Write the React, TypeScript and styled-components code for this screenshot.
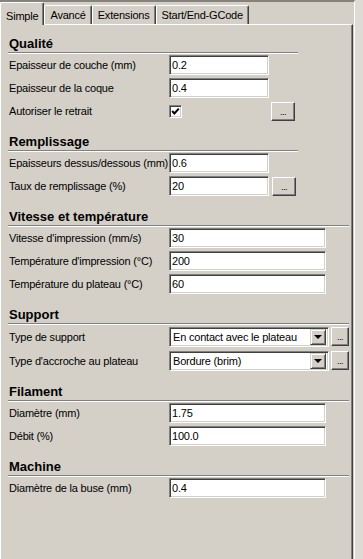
import styled, { createGlobalStyle } from 'styled-components'

const GlobalStyle = createGlobalStyle`
  html, body {
    margin: 0;
    padding: 0;
    background: #d4d0c8;
  }
  body {
    width: 363px;
    height: 559px;
    overflow: hidden;
    font-family: "Liberation Sans", Arial, sans-serif;
  }
`

const Frame = styled.div`
    display: flex;
    width: 363px;
    height: 559px;
    background: #d4d0c8;
`

const Window = styled.div`
    width: 353px;
    padding-right: 1px;
    border-top: 2px solid #85827c;
    border-right: 1px solid #fff;
    display: flex;
    flex-direction: column;
`

const SideStrip = styled.div`
    flex: 1;
    background: #dedbd4;
`

const TabBar = styled.div`
    display: flex;
    align-items: flex-end;
    height: 22px;
    position: relative;
    z-index: 1;
`

const Tab = styled.div<{ $active?: boolean }>`
    box-sizing: border-box;
    height: ${({ $active }) => ($active ? 23 : 19)}px;
    margin-bottom: ${({ $active }) => ($active ? -1 : 0)}px;
    padding: ${({ $active }) => ($active ? '3px 5px 0' : '0 5px')};
    display: flex;
    align-items: center;
    background: #d4d0c8;
    border-top: 1px solid #fff;
    border-left: 1px solid #fff;
    border-right: 1px solid #404040;
    border-radius: 2px 2px 0 0;
    box-shadow: inset -1px 0 #808080;
    font-size: 11px;
    letter-spacing: -0.2px;
    color: #000;
    white-space: nowrap;
`

const Panel = styled.div`
    flex: 1;
    border-top: 1px solid #fff;
    border-left: 1px solid #fff;
    border-right: 1px solid #404040;
    box-shadow: inset -1px 0 #808080;
    padding: 10px 0 0 7px;
`

const Section = styled.section<{ $width: number }>`
    width: ${({ $width }) => $width}px;
    & + & {
        margin-top: 12px;
    }
`

const Heading = styled.h2`
    margin: 0 0 2px;
    padding-left: 1px;
    font-size: 13px;
    line-height: 17px;
    font-weight: bold;
    color: #000;
    border-bottom: 1px solid #808080;
    box-shadow: 0 1px #fff;
`

const Fields = styled.div`
    display: flex;
    flex-direction: column;
    gap: 3px;
`

const Row = styled.div<{ $height?: number }>`
    display: flex;
    align-items: center;
    height: ${({ $height }) => $height ?? 20}px;
`

const Label = styled.label`
    width: 161px;
    flex: none;
    padding-left: 1px;
    box-sizing: border-box;
    font-size: 11px;
    letter-spacing: -0.2px;
    color: #000;
    white-space: nowrap;
`

const Input = styled.input<{ $width: number }>`
    box-sizing: border-box;
    width: ${({ $width }) => $width}px;
    height: 20px;
    margin: 0;
    padding: 0 0 0 2px;
    background: #fff;
    border: 1px solid;
    border-color: #808080 #fff #fff #808080;
    box-shadow: inset 1px 1px #404040, inset -1px -1px #d4d0c8;
    outline: none;
    font-family: "Liberation Sans", Arial, sans-serif;
    font-size: 11px;
    letter-spacing: -0.2px;
    color: #000;
`

const CheckBox = styled.span`
    box-sizing: border-box;
    width: 13px;
    height: 13px;
    display: flex;
    align-items: center;
    justify-content: center;
    background: #fff;
    border: 1px solid;
    border-color: #808080 #fff #fff #808080;
    box-shadow: inset 1px 1px #404040, inset -1px -1px #d4d0c8;
`

const MoreButton = styled.button<{ $width: number; $gap: number }>`
    box-sizing: border-box;
    width: ${({ $width }) => $width}px;
    height: 19px;
    margin: 0 0 0 ${({ $gap }) => $gap}px;
    padding: 0 0 3px;
    background: #d4d0c8;
    border: 1px solid;
    border-color: #fff #404040 #404040 #fff;
    box-shadow: inset -1px -1px #808080;
    font-family: "Liberation Sans", Arial, sans-serif;
    font-size: 9px;
    letter-spacing: -0.5px;
    line-height: 1;
    color: #000;
    display: flex;
    align-items: flex-end;
    justify-content: center;
`

const Combo = styled.div`
    box-sizing: border-box;
    width: 160px;
    height: 20px;
    display: flex;
    align-items: center;
    justify-content: space-between;
    padding: 2px 2px 2px 3px;
    background: #fff;
    border: 1px solid;
    border-color: #808080 #fff #fff #808080;
    box-shadow: inset 1px 1px #404040, inset -1px -1px #d4d0c8;
    font-size: 11px;
    letter-spacing: -0.2px;
    color: #000;
    white-space: nowrap;
`

const DropButton = styled.span`
    box-sizing: border-box;
    width: 16px;
    height: 16px;
    display: flex;
    align-items: center;
    justify-content: center;
    background: #d4d0c8;
    border: 1px solid;
    border-color: #d4d0c8 #404040 #404040 #d4d0c8;
    box-shadow: inset 1px 1px #fff, inset -1px -1px #808080;
`

const Arrow = styled.span`
    width: 0;
    height: 0;
    border-left: 4px solid transparent;
    border-right: 4px solid transparent;
    border-top: 4px solid #000;
    margin-top: 1px;
`

const Check = () => (
    <svg width="9" height="9" viewBox="0 0 9 9">
        <polyline points="1.2,4 3.4,6.4 7.8,1.6" fill="none" stroke="#000" strokeWidth="2" />
    </svg>
)

const Select = ({ value }: { value: string }) => (
    <Combo>
        <span>{value}</span>
        <DropButton>
            <Arrow />
        </DropButton>
    </Combo>
)

export default function App() {
    return (
        <>
            <GlobalStyle />
            <Frame>
                <Window>
                    <TabBar>
                        <Tab $active>Simple</Tab>
                        <Tab>Avancé</Tab>
                        <Tab>Extensions</Tab>
                        <Tab>Start/End-GCode</Tab>
                    </TabBar>
                    <Panel>
                        <Section $width={290}>
                            <Heading>Qualité</Heading>
                            <Fields>
                                <Row>
                                    <Label>Epaisseur de couche (mm)</Label>
                                    <Input $width={100} defaultValue="0.2" />
                                </Row>
                                <Row>
                                    <Label>Epaisseur de la coque</Label>
                                    <Input $width={100} defaultValue="0.4" />
                                </Row>
                                <Row>
                                    <Label>Autoriser le retrait</Label>
                                    <CheckBox>
                                        <Check />
                                    </CheckBox>
                                    <MoreButton $width={24} $gap={89}>...</MoreButton>
                                </Row>
                            </Fields>
                        </Section>

                        <Section $width={290}>
                            <Heading>Remplissage</Heading>
                            <Fields>
                                <Row>
                                    <Label>Epaisseurs dessus/dessous (mm)</Label>
                                    <Input $width={100} defaultValue="0.6" />
                                </Row>
                                <Row>
                                    <Label>Taux de remplissage (%)</Label>
                                    <Input $width={100} defaultValue="20" />
                                    <MoreButton $width={24} $gap={3}>...</MoreButton>
                                </Row>
                            </Fields>
                        </Section>

                        <Section $width={341}>
                            <Heading>Vitesse et température</Heading>
                            <Fields>
                                <Row>
                                    <Label>Vitesse d'impression (mm/s)</Label>
                                    <Input $width={157} defaultValue="30" />
                                </Row>
                                <Row>
                                    <Label>Température d'impression (°C)</Label>
                                    <Input $width={157} defaultValue="200" />
                                </Row>
                                <Row>
                                    <Label>Température du plateau (°C)</Label>
                                    <Input $width={157} defaultValue="60" />
                                </Row>
                            </Fields>
                        </Section>

                        <Section $width={341}>
                            <Heading>Support</Heading>
                            <Fields>
                                <Row $height={21}>
                                    <Label>Type de support</Label>
                                    <Select value="En contact avec le plateau" />
                                    <MoreButton $width={18} $gap={2}>...</MoreButton>
                                </Row>
                                <Row $height={21}>
                                    <Label>Type d'accroche au plateau</Label>
                                    <Select value="Bordure (brim)" />
                                    <MoreButton $width={18} $gap={2}>...</MoreButton>
                                </Row>
                            </Fields>
                        </Section>

                        <Section $width={341}>
                            <Heading>Filament</Heading>
                            <Fields>
                                <Row>
                                    <Label>Diamètre (mm)</Label>
                                    <Input $width={157} defaultValue="1.75" />
                                </Row>
                                <Row>
                                    <Label>Débit (%)</Label>
                                    <Input $width={157} defaultValue="100.0" />
                                </Row>
                            </Fields>
                        </Section>

                        <Section $width={341}>
                            <Heading>Machine</Heading>
                            <Fields>
                                <Row>
                                    <Label>Diamètre de la buse (mm)</Label>
                                    <Input $width={157} defaultValue="0.4" />
                                </Row>
                            </Fields>
                        </Section>
                    </Panel>
                </Window>
                <SideStrip />
            </Frame>
        </>
    )
}
